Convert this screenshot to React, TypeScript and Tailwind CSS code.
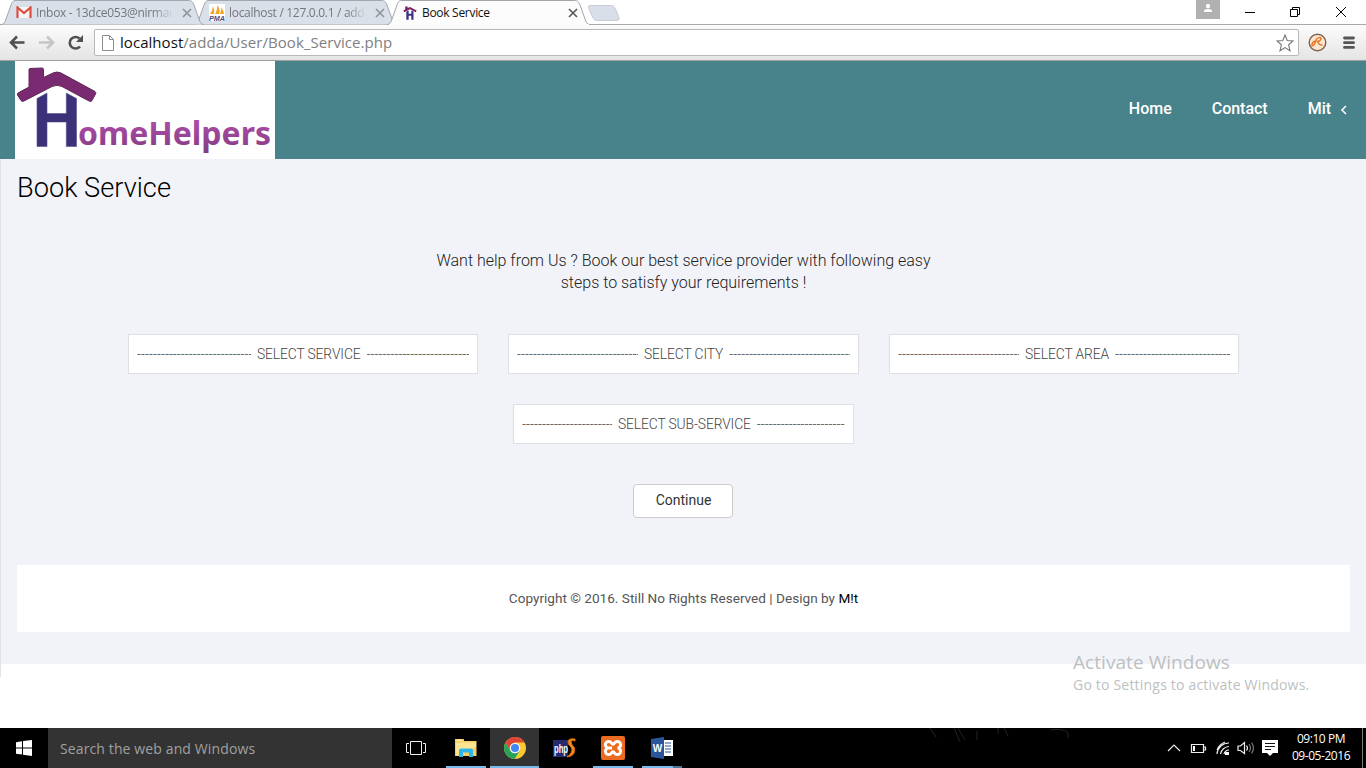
import type { ReactNode } from "react";

const UI = "font-['Open_Sans','Noto_Sans',sans-serif]";

function Close({ active = false }: { active?: boolean }) {
  return (
    <svg width="10" height="10" viewBox="0 0 10 10" className="shrink-0">
      <path d="M1 1 9 9M9 1 1 9" stroke={active ? "#5a5a5a" : "#909398"} strokeWidth="1.7" />
    </svg>
  );
}

function Tab({ active = false, icon, label, layer }: { active?: boolean; icon: ReactNode; label: string; layer: string }) {
  return (
    <div className={`relative h-[26px] w-[204px] -ml-[11px] first:ml-0 ${layer}`}>
      <svg className="absolute inset-0" width="204" height="26" viewBox="0 0 204 26">
        <path
          d="M0 24.5C3 24.5 4 22 5 19L10 5C11.5 1.5 12 .5 15 .5H187C191 .5 191.500 2 193 5L198 19C199 22 200 24.500 203 24.500"
          fill={active ? "#fcfcfc" : "#dae0e9"}
          stroke="#a3a6aa"
        />
        {active && <path d="M2 24h200v2H2z" fill="#fbfbfb" />}
      </svg>
      <div className="relative flex h-[25px] items-center pl-[15px]">
        <span className="flex w-[16px] shrink-0 justify-center">{icon}</span>
        <span
          className={`${UI} ml-[4px] w-[138px] shrink-0 overflow-hidden text-[12px] tracking-[-0.3px] whitespace-nowrap ${active ? "text-[#111]" : "mask-r-from-85% text-[#74777c]"}`}
        >
          {label}
        </span>
        <span className="ml-[8px] flex">
          <Close active={active} />
        </span>
      </div>
    </div>
  );
}

function House() {
  return (
    <svg width="14" height="15" viewBox="0 0 84 88">
      <path d="M2 32 13 26V8H28V17L42 11 82 32 76 42 42 25 8 42Z" fill="#7a2568" />
      <path d="M20 38 34 32V52H50V32L63 38V87H50V63H34V87H20Z" fill="#3d2f80" />
    </svg>
  );
}

function Browser() {
  return (
    <div className="h-[61px] shrink-0 bg-white">
      <div className="flex h-[24px] items-start">
        <div className="isolate flex items-start pl-[1px]">
          <Tab
            layer="z-10"
            label="Inbox - 13dce053@nirmau"
            icon={
              <svg width="16" height="13" viewBox="0 0 16 13">
                <path d="M1 1H15V12H1Z" fill="#f6f6f6" />
                <path d="M1.500 12V1.500L8 7 14.500 1.500V12" fill="none" stroke="#dc4e41" strokeWidth="2.200" />
              </svg>
            }
          />
          <Tab
            layer="z-0"
            label="localhost / 127.0.0.1 / add"
            icon={
              <svg width="16" height="17" viewBox="0 0 16 17">
                <path d="M0 0H16V17H0Z" fill="#fff" />
                <path d="M1 10Q4 6 4 2Q6 6 5 10ZM6 10Q9 5 8 1Q12 5 10 10ZM11 10Q13 6 12 3Q15 7 15 10Z" fill="#f5a31c" />
                <text x="0" y="16.500" fontSize="7" fontWeight="bold" fontStyle="italic" textLength="16" lengthAdjust="spacingAndGlyphs" fill="#4b4b78" fontFamily="Liberation Sans, sans-serif">PMA</text>
              </svg>
            }
          />
          <Tab layer="z-20" active label="Book Service" icon={<House />} />
        </div>
        <svg width="36" height="22" viewBox="0 0 36 22" className="-ml-[6px]">
          <path d="M5 5.500H26Q29 5.500 30 8L34 17.500Q35 20.500 32 20.500H12Q9 20.500 8 18L3.500 8Q2.500 5.500 5 5.500Z" fill="#d9dfe8" stroke="#c8cdd5" />
        </svg>
        <svg width="170" height="24" viewBox="0 0 170 24" className="ml-auto">
          <path d="M0 0H24V19H0Z" fill="#b1b1b1" />
          <circle cx="12" cy="6" r="2.200" fill="#fff" />
          <path d="M8 12V11Q8 9 12 9Q16 9 16 11V12Z" fill="#fff" />
          <g fill="none" stroke="#000" strokeWidth="1" transform="translate(2 0)">
            <path d="M47 12.500H57M92.500 9.500H99.500V16.500H92.500ZM94.500 9.500V7.500H101.500V14.500H99.500" />
            <path d="M138 7 148 17M148 7 138 17" />
          </g>
        </svg>
      </div>
      <div className="flex h-[37px] items-center border-t border-b border-t-[#a9a9a9] border-b-[#a0a0a0] bg-linear-to-b from-[#fcfcfc] to-[#e4e4e4]">
        <svg width="94" height="30" viewBox="0 0 94 30" className="shrink-0">
          <path d="M24.500 14.500H11.500M17 8.500 11 14.500 17 20.500" fill="none" stroke="#4f4f4f" strokeWidth="2.500" />
          <path d="M39 14.500H52M47 8.500 53 14.500 47 20.500" fill="none" stroke="#c5c5c5" strokeWidth="2.500" />
          <path d="M80 18.500A5.800 5.800 0 1 1 79.500 10.500" fill="none" stroke="#505050" strokeWidth="2.600" />
          <path d="M83 7V14H76Z" fill="#505050" />
        </svg>
        <div className="flex h-[27px] w-[1205px] shrink-0 items-center rounded-[2px] border border-[#b8b8b8] bg-white">
          <svg width="12" height="16" viewBox="0 0 12 16" className="ml-[7px] shrink-0">
            <path d="M.5 .5H7.500L11.500 4.500V15.500H.5ZM7.500 .5V4.500H11.500" fill="#fff" stroke="#8c8c8c" />
          </svg>
          <span className={`${UI} ml-[6px] pb-[1px] text-[15px] tracking-[0.050px] whitespace-nowrap text-[#808080]`}>
            <span className="text-[#111]">localhost</span>/adda/User/Book_Service.php
          </span>
          <svg width="18" height="18" viewBox="0 0 18 18" className="mr-[4px] ml-auto shrink-0">
            <path d="M9 1 11.200 6.500 17 7 12.600 10.800 14 16.800 9 13.600 4 16.800 5.400 10.800 1 7 6.800 6.500Z" fill="#fff" stroke="#777" strokeWidth="1.100" />
          </svg>
        </div>
        <svg width="60" height="30" viewBox="0 0 60 30" className="shrink-0">
          <circle cx="18.500" cy="14.500" r="8.300" fill="#fbe6d2" stroke="#7d6350" strokeWidth="1.400" />
          <path d="M16.500 13Q12.500 14 13 17.500Q15 19 17.500 11Q22 8 22 11Q21 13.500 18.500 13.500Q20 17.500 23.500 17" fill="none" stroke="#e87522" strokeWidth="1.400" />
          <path d="M45.500 10H54.500M45.500 14.700H54.500M45.500 19.400H54.500" stroke="#555" strokeWidth="2.800" strokeLinecap="round" />
        </svg>
      </div>
    </div>
  );
}

function Logo() {
  return (
    <svg width="260" height="98" viewBox="0 0 260 98" className="bg-white">
      <path
        d="M3 32 14 26V9Q14 7.500 15 7.500L27 7Q28.500 7 28.500 8.500V16.500L38 12Q42 10 46 12L80 30.500Q81.500 31.500 80.500 33L77 39.500Q76 41 74 40L47 25.500Q42 23 37 25.500L9 40Q7 41 6 39.500L2.500 34Q2 32.500 3 32Z"
        fill="#7a2a70"
        stroke="#5f2558"
        strokeWidth="1"
      />
      <path d="M22 37.500 32 32V52.500H51.300V32L61.500 37.500V85.500H51.300V61H32V85.500H22Z" fill="#3c3178" stroke="#55508f" strokeWidth=".6" />
      <defs>
        <linearGradient id="word" x1="0" y1="0" x2="0" y2="1">
          <stop offset=".3" stopColor="#a94ba5" />
          <stop offset="1" stopColor="#813b80" />
        </linearGradient>
      </defs>
      <text x="63" y="83.500" fontFamily="'Noto Sans', sans-serif" fontWeight="bold" fontSize="32.500" textLength="193" lengthAdjust="spacingAndGlyphs" fill="url(#word)">
        omeHelpers
      </text>
    </svg>
  );
}

function Select({ label, width, left, before, after }: { label: string; width: string; left: string; before: number; after: number }) {
  return (
    <div className={`${width} flex h-[40px] items-center border border-[#dddfe2] bg-white px-[8px] pt-[1px] text-[13.800px] font-light whitespace-nowrap text-[#444]`}>
      <span className={`${left} shrink-0 overflow-hidden tracking-[0.030px]`}>{"-".repeat(before)}</span>
      <span className="mx-[6px] shrink-0 tracking-[-0.1px]">{label}</span>
      <span className="min-w-0 grow overflow-hidden tracking-[0.030px]">{"-".repeat(after)}</span>
    </div>
  );
}

function Page() {
  return (
    <div className="flex h-[667px] shrink-0 flex-col bg-white font-[Roboto,sans-serif]">
      <header className="flex h-[98px] shrink-0 items-center bg-[#48828a] pl-[15px] text-[16px] font-medium text-white">
        <Logo />
        <nav className="ml-auto flex items-center pr-[19px] pb-[3px] tracking-[-0.020px]">
          <a>Home</a>
          <a className="ml-[40px]">Contact</a>
          <a className="ml-[40px] flex items-center">
            Mit
            <svg width="7" height="10" viewBox="0 0 7 10" className="ml-[9px] mt-[3px]">
              <path d="M6 1 2 5 6 9" fill="none" stroke="#fff" strokeWidth="1.600" />
            </svg>
          </a>
        </nav>
      </header>
      <div className="h-[518px] shrink-0 border-l border-[#e3e3e3]">
        <main className="flex h-[505px] flex-col items-center bg-[#f2f3f8] px-[16px]">
          <h1 className="mt-[10px] h-[38px] self-start text-[27.200px] leading-[38px] font-light text-black">Book Service</h1>
          <p className="mt-[43px] w-[510px] text-center text-[16px] leading-[22px] font-light text-[#222]">
            Want help from Us ? Book our best service provider with following easy
            <br />
            steps to satisfy your requirements !
          </p>
          <div className="mt-[40px] flex gap-[30px]">
            <Select label="SELECT SERVICE" width="w-[350px]" left="w-[114px]" before={30} after={27} />
            <Select label="SELECT CITY" width="w-[351px]" left="w-[121px]" before={32} after={32} />
            <Select label="SELECT AREA" width="w-[350px]" left="w-[121px]" before={32} after={30} />
          </div>
          <div className="mt-[30px]">
            <Select label="SELECT SUB-SERVICE" width="w-[341px]" left="w-[90px]" before={24} after={23} />
          </div>
          <button className="mt-[40px] mr-[1px] h-[34px] w-[100px] rounded-[4px] border border-[#ccc] bg-white pb-[2px] pl-[1px] text-[14px] text-[#333]">Continue</button>
          <footer className="mt-[47px] flex h-[67px] w-full items-center justify-center bg-white text-[13.600px] whitespace-pre text-[#555]">
            Copyright © 2016. Still No Rights Reserved | Design by <span className="text-black">M!t</span>
          </footer>
        </main>
      </div>
      <div className="h-[51px]" />
    </div>
  );
}

function TaskItem({ children, open = false, active = false, grouped = false }: { children: ReactNode; open?: boolean; active?: boolean; grouped?: boolean }) {
  return (
    <div className={`flex h-[40px] w-[49px] flex-col items-center pl-[1px] ${active ? "bg-[#333]" : ""}`}>
      <div className="flex h-[38px] items-center pt-[2px]">{children}</div>
      {open && (
        <div className={`flex h-[2px] justify-end bg-[#76b9ed] ${active ? "-ml-px w-[49px]" : "w-[40px]"}`}>
          {grouped && <span className="w-[9px] bg-[#4b7599]" />}
        </div>
      )}
    </div>
  );
}

function Taskbar() {
  return (
    <div className={`flex h-[40px] shrink-0 items-center bg-black text-white ${UI}`}>
      <div className="flex w-[48px] justify-center">
        <svg width="16" height="16" viewBox="0 0 16 16">
          <path d="M0 2.200 6 1.300V7.400H0ZM7 1.100 16 0V7.400H7ZM0 8.500H6V14.600L0 13.800ZM7 8.500H16V16L7 14.800Z" fill="#fff" />
        </svg>
      </div>
      <div className="flex h-[40px] w-[344px] items-center bg-[#333] pl-[12px] text-[14px] tracking-[0.120px] text-[#a0a0a0]">Search the web and Windows</div>
      <div className="flex w-[49px] justify-center pr-[1px]">
        <svg width="20" height="14" viewBox="0 0 20 14">
          <path d="M4.500 .5H15.500V13.500H4.500ZM3 2.500H.5V11.500H3M17 2.500H19.500V11.500H17" fill="none" stroke="#eee" />
        </svg>
      </div>
      <TaskItem open>
        <svg width="22" height="19" viewBox="0 0 22 19">
          <path d="M0 0H9V2H21.500V17H0Z" fill="#f5cf65" />
          <path d="M1 3.500H21V8L1 17Z" fill="#ffe493" />
          <path d="M4 18V11Q4 9.500 6 9.500H16Q18 9.500 18 11V18H14V13.500H8V18Z" fill="#2fb5ea" />
          <path d="M1.500 .8H7V2H1.500Z" fill="#fff1b9" />
        </svg>
      </TaskItem>
      <TaskItem open active>
        <svg width="22" height="22" viewBox="0 0 22 22">
          <circle cx="11" cy="11" r="11" fill="#fbc92f" />
          <path d="M1.500 5.500A11 11 0 0 1 20.500 5.500H11L6.200 13.500Z" fill="#df4436" />
          <path d="M1.500 5.500A11 11 0 0 0 10.500 22L15.800 13.700 11 16Q7.500 16 6.200 13.700Z" fill="#26a35a" />
          <circle cx="11" cy="11" r="5.300" fill="#f5f5f5" />
          <circle cx="11" cy="11" r="4" fill="#4285f4" />
        </svg>
      </TaskItem>
      <TaskItem>
        <svg width="23" height="20" viewBox="0 0 23 20">
          <path d="M0 2H15V19H0Z" fill="#252b70" />
          <text x="1" y="15" fontSize="12" fontWeight="bold" textLength="14" lengthAdjust="spacingAndGlyphs" fill="#fff" fontFamily="Liberation Sans, sans-serif">php</text>
          <path d="M22 1Q15 0 15 4Q15 7 18 9Q21 14 14 19Q23 18 21.500 10Q18 6 18 3Q19 2 22 3Z" fill="#f28a1d" stroke="#d96b0d" />
        </svg>
      </TaskItem>
      <TaskItem open>
        <svg width="24" height="24" viewBox="0 0 24 24">
          <rect width="24" height="24" rx="2" fill="#ec6b20" />
          <path d="M11 12H7.500A3.300 3.300 0 1 1 10.500 7Q12 9.500 13.500 7A3.300 3.300 0 1 1 16.500 12A3.300 3.300 0 1 1 13.500 17Q12 14.500 10.500 17A3.300 3.300 0 1 1 7.500 12" fill="none" stroke="#fff" strokeWidth="3" />
        </svg>
      </TaskItem>
      <TaskItem open grouped>
        <svg width="22" height="22" viewBox="0 0 22 22">
          <path d="M12 3H22V19H12Z" fill="#fff" />
          <path d="M14 6H20M14 9H20M14 12H20M14 15H20" stroke="#2b579a" strokeWidth="1.200" />
          <path d="M0 2 13 0V22L0 20Z" fill="#2b579a" />
          <text x="1.800" y="14.500" fontSize="10" fontWeight="bold" fill="#fff" fontFamily="Liberation Sans, sans-serif">W</text>
        </svg>
      </TaskItem>
      <svg width="170" height="40" viewBox="0 0 170 40" className="ml-[236px] shrink-0" fill="none" stroke="#242424">
        <path d="M8 0 14 9M32 0 38 14M36 0 43 12M55 3V12M76 0V6M82 0 86 8M128 2Q142 0 146 5V10" />
      </svg>
      <div className="ml-auto flex h-[40px] items-center">
        <svg width="112" height="40" viewBox="0 0 112 40" fill="none" stroke="#eee" strokeWidth="1.200">
          <path d="M1 23 7 17 13 23" />
          <path d="M24.500 16.500H36.500V24.500H24.500ZM37 19H38.500V22H37" />
          <path d="M26 18H28V23H26Z" fill="#fff" stroke="none" />
          <path d="M50 26A12 12 0 0 1 62 15M53.500 26A9 9 0 0 1 62 18.500M57 26A5.500 5.500 0 0 1 62 22M50 22A14 14 0 0 1 58 14" />
          <path d="M58 24H62V27H58Z" fill="#fff" stroke="none" />
          <path d="M71 18H73.500L77.500 14.500V25.500L73.500 22.500H71Z" />
          <path d="M79.500 17.500Q81.500 20 79.500 22.500" />
          <path d="M82 16Q85 20 82 24M84.500 14.500Q88.500 20 84.500 25.500" stroke="#777" />
          <path d="M95 12H111V25H106L103 28 100 25H95Z" fill="#fff" stroke="none" />
          <path d="M98 15.500H108M98 18.500H108M98 21.500H104" stroke="#111" />
        </svg>
        <div className="ml-[5px] w-[74px] pb-[2px] text-center text-[12px] leading-[17px] tracking-[-0.450px] whitespace-nowrap">
          <div>09:10 PM</div>
          <div>09-05-2016</div>
        </div>
        <div className="ml-[4px] h-[40px] w-[4px] border-l border-[#777]" />
      </div>
    </div>
  );
}

export default function App() {
  return (
    <div className="relative flex h-[768px] w-[1366px] flex-col overflow-hidden">
      <Browser />
      <Page />
      <Taskbar />
      <div className={`absolute top-[649px] left-[1073px] whitespace-nowrap text-[#bdbfc2] ${UI}`}>
        <div className="text-[19px] leading-[26px] tracking-[0.060px]">Activate Windows</div>
        <div className="text-[14px] leading-[20px] tracking-[0.200px]">Go to Settings to activate Windows.</div>
      </div>
    </div>
  );
}
